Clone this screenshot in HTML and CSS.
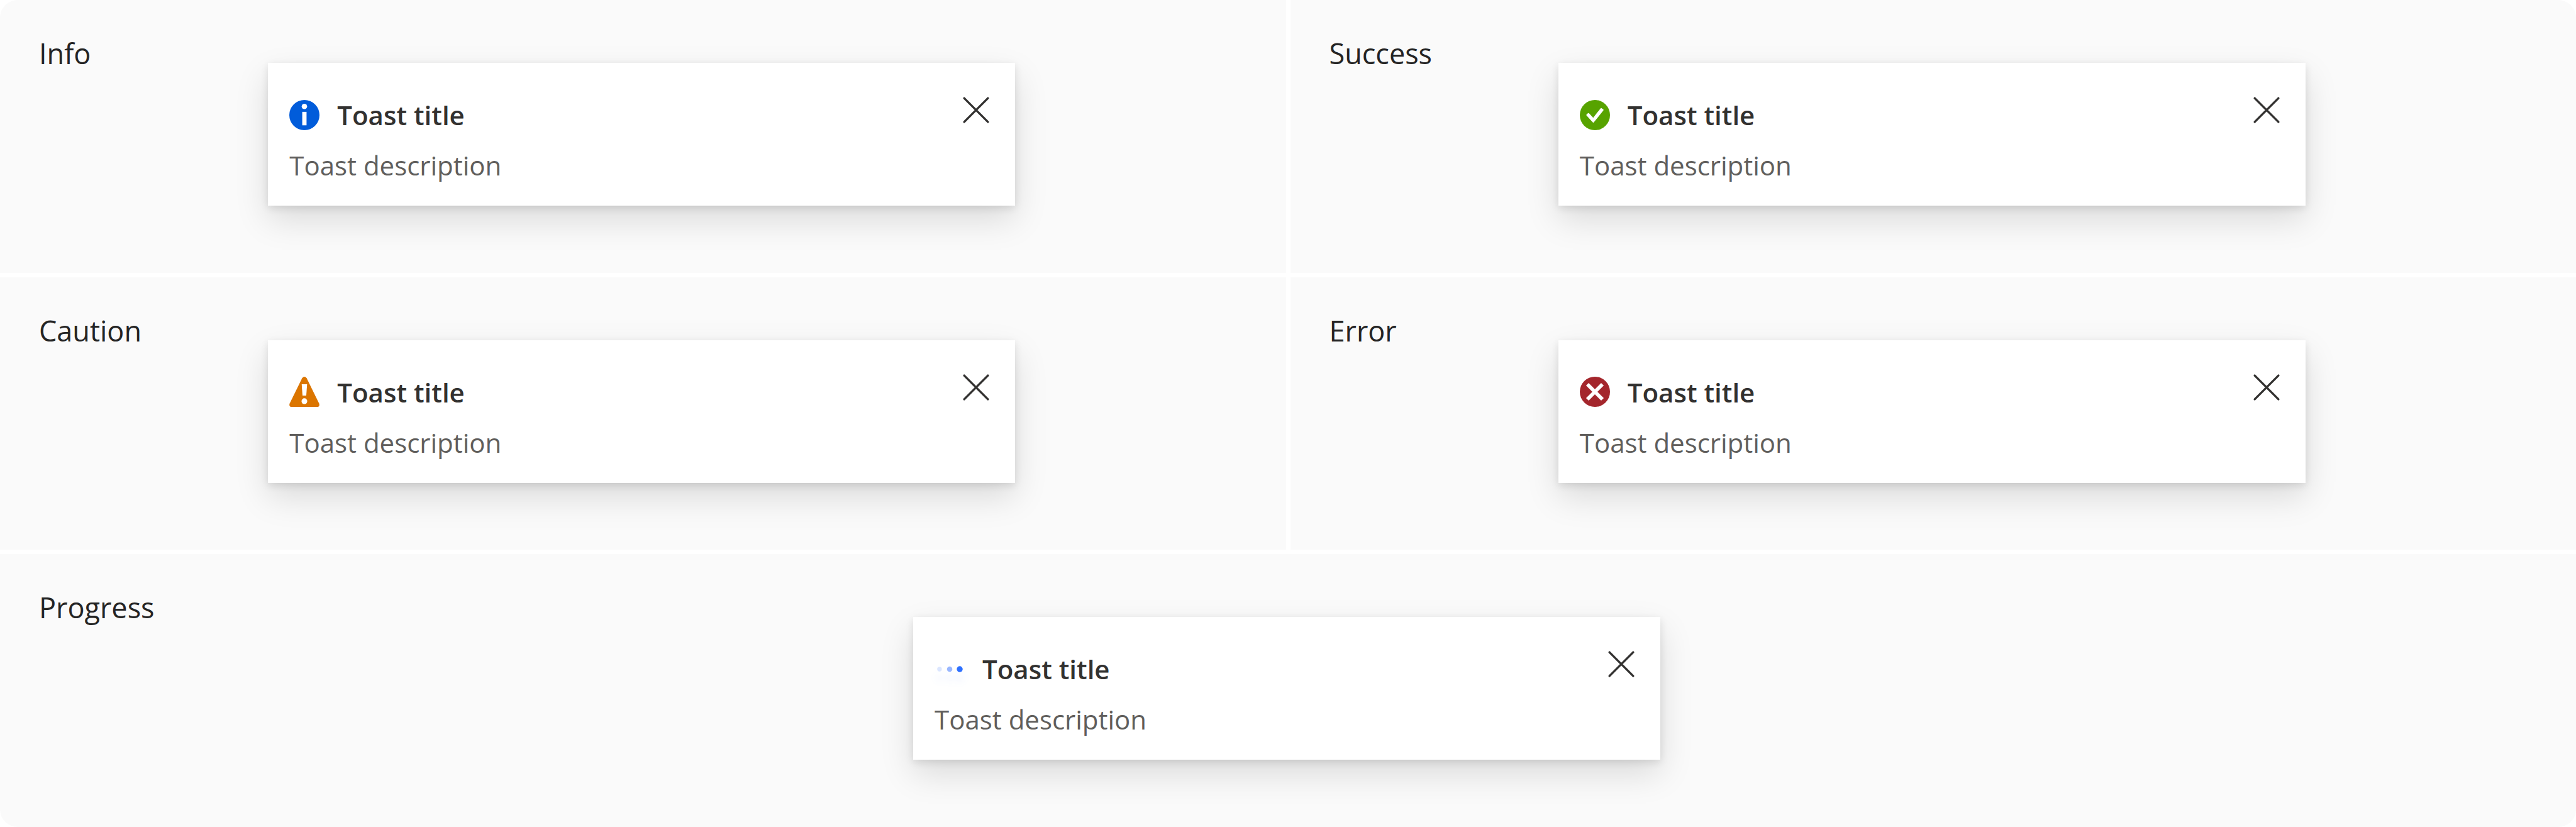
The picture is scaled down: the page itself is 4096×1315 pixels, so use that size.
FILE: index.html
```html
<!DOCTYPE html>
<html lang="en">
<head>
<meta charset="utf-8">
<meta name="viewport" content="width=device-width, initial-scale=1">
<title>Toast variants</title>
<link rel="stylesheet" href="styles.css">
</head>
<body>
<svg class="sprite" aria-hidden="true">
  <symbol id="close" viewBox="0 0 56 56"><path d="M6 6 50 50M50 6 6 50" fill="none" stroke="currentColor" stroke-width="4" stroke-linecap="round"/></symbol>
</svg>
<main class="board">
  <section class="cell">
    <h2 class="label">Info</h2>
    <article class="toast">
      <div class="content">
        <header class="heading">
          <svg class="icon" viewBox="0 0 56 56" aria-hidden="true"><circle cx="28" cy="28" r="28" fill="#015cda"/><circle cx="28" cy="12" r="5" fill="#fff"/><path d="M24 22h8v25h-8z" fill="#fff"/></svg>
          <h3 class="title">Toast title</h3>
        </header>
        <p class="description">Toast description</p>
      </div>
      <button class="close" type="button" aria-label="Close"><svg class="icon" aria-hidden="true"><use href="#close"/></svg></button>
    </article>
  </section>
  <section class="cell">
    <h2 class="label">Success</h2>
    <article class="toast">
      <div class="content">
        <header class="heading">
          <svg class="icon" viewBox="0 0 56 56" aria-hidden="true"><circle cx="28" cy="28" r="28" fill="#57a300"/><path d="M12.3 28.6Q11.6 27.6 12.6 26.8L15.2 24.4Q16.2 23.8 17 24.6L24.8 32.9 38.6 15.4Q39.3 14.4 40.3 15.1L43.6 17.5Q44.5 18.3 43.8 19.3L26.2 41.2Q25.1 42.5 24 41.4Z" fill="#fff"/></svg>
          <h3 class="title">Toast title</h3>
        </header>
        <p class="description">Toast description</p>
      </div>
      <button class="close" type="button" aria-label="Close"><svg class="icon" aria-hidden="true"><use href="#close"/></svg></button>
    </article>
  </section>
  <section class="cell">
    <h2 class="label">Caution</h2>
    <article class="toast">
      <div class="content">
        <header class="heading">
          <svg class="icon" viewBox="0 0 56 56" aria-hidden="true"><path d="M23.8 2.6Q28-2.6 32.2 2.6L55.4 50Q57 56 51.5 56H4.5Q-1 56 .6 50Z" fill="#db7500"/><path d="M23 14h10l-1.5 21h-7z" fill="#fff"/><circle cx="28" cy="45.4" r="5.3" fill="#fff"/></svg>
          <h3 class="title">Toast title</h3>
        </header>
        <p class="description">Toast description</p>
      </div>
      <button class="close" type="button" aria-label="Close"><svg class="icon" aria-hidden="true"><use href="#close"/></svg></button>
    </article>
  </section>
  <section class="cell">
    <h2 class="label">Error</h2>
    <article class="toast">
      <div class="content">
        <header class="heading">
          <svg class="icon" viewBox="0 0 56 56" aria-hidden="true"><circle cx="28" cy="28" r="28" fill="#a4262c"/><path d="M14 14 42 42M42 14 14 42" fill="none" stroke="#fff" stroke-width="6.8"/></svg>
          <h3 class="title">Toast title</h3>
        </header>
        <p class="description">Toast description</p>
      </div>
      <button class="close" type="button" aria-label="Close"><svg class="icon" aria-hidden="true"><use href="#close"/></svg></button>
    </article>
  </section>
  <section class="cell cell-wide">
    <h2 class="label">Progress</h2>
    <article class="toast">
      <div class="content">
        <header class="heading">
          <svg class="icon dots" viewBox="0 0 56 56" aria-hidden="true"><circle cx="9.2" cy="28" r="4.3" fill="#dbe6ff"/><circle cx="28" cy="28" r="5" fill="#99b7ff"/><circle cx="46.7" cy="28" r="5.5" fill="#2e70ff"/></svg>
          <h3 class="title">Toast title</h3>
        </header>
        <p class="description">Toast description</p>
      </div>
      <button class="close" type="button" aria-label="Close"><svg class="icon" aria-hidden="true"><use href="#close"/></svg></button>
    </article>
  </section>
</main>
</body>
</html>
```
FILE: styles.css
```css
* {
  box-sizing: border-box;
}

body {
  margin: 0;
  background: #fff;
  font-family: "Open Sans", "Noto Sans", sans-serif;
}

.sprite {
  display: none;
}

.board {
  display: grid;
  grid-template-columns: repeat(2, minmax(0, 1fr));
  grid-auto-rows: 1fr;
  gap: 7px;
  min-height: 100vh;
  border-radius: 28px;
  overflow: hidden;
}

/* The label and the toast share one grid area, so the toast is centred on the whole cell. */
.cell {
  display: grid;
  align-items: start;
  padding: 55px 4px 55px 0;
  background: #fafafa;
}

.cell-wide {
  grid-column: 1 / -1;
}

.label,
.toast {
  grid-area: 1 / 1;
}

.label {
  margin: 0;
  padding-left: 62px;
  color: #242424;
  font-size: 45px;
  font-weight: 400;
  line-height: 60px;
}

.toast {
  display: flex;
  justify-self: center;
  align-items: flex-start;
  width: 1188px;
  max-width: 100%;
  margin-top: 45px;
  padding: 51px 38px 33px 34px;
  background: #fff;
  box-shadow: 0 22px 50px rgba(0, 0, 0, 0.13), 0 4px 12px rgba(0, 0, 0, 0.11);
}

.content {
  display: grid;
  flex: 1;
  gap: 17px;
}

.heading {
  display: flex;
  align-items: center;
  gap: 28px;
}

.icon {
  display: block;
  width: 48px;
  height: 48px;
}

.dots {
  filter: drop-shadow(0 14px 6px rgba(46, 112, 255, 0.1));
}

.title,
.description {
  margin: 0;
  font-size: 42px;
  line-height: 63px;
}

.title {
  color: #323130;
  font-weight: 600;
}

.description {
  color: #605e5c;
}

.close {
  padding: 0;
  border: 0;
  background: none;
  color: #323130;
  cursor: pointer;
}
```
